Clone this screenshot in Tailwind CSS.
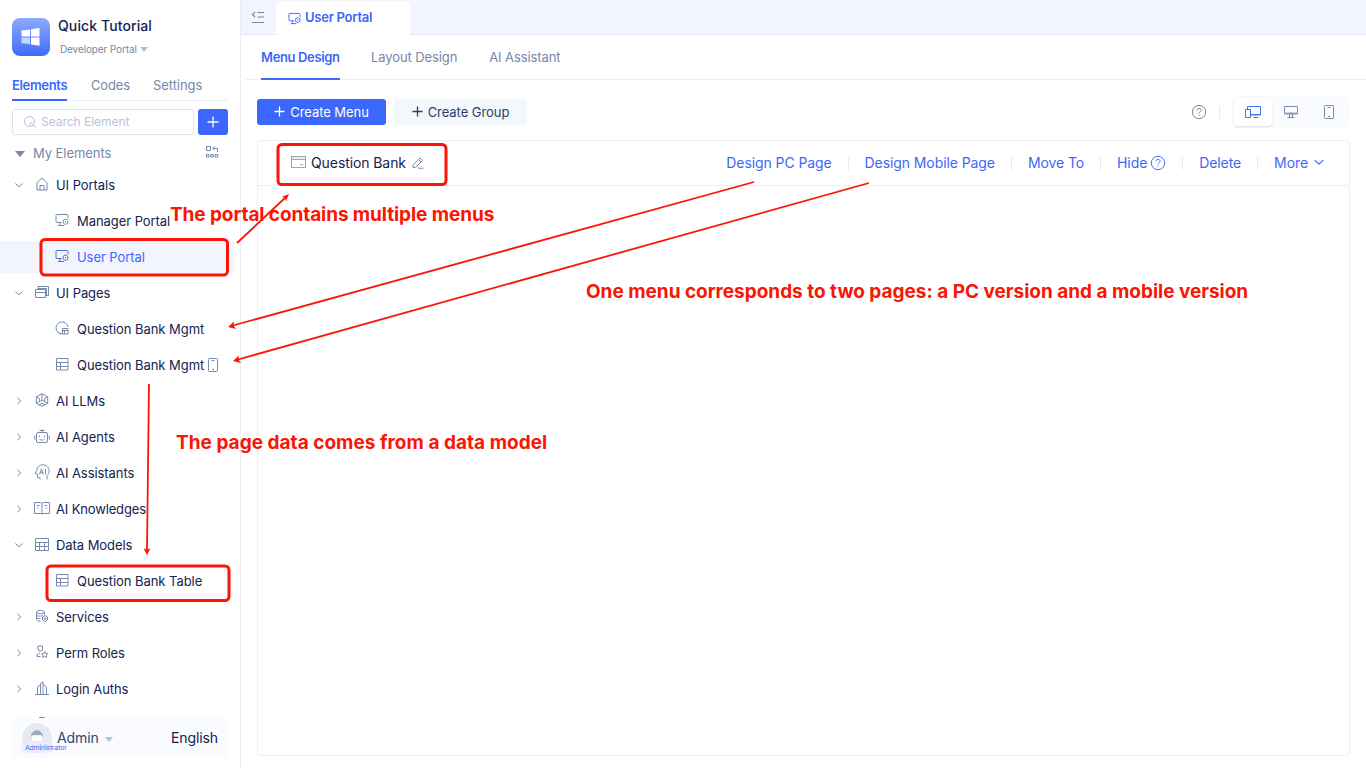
<!DOCTYPE html>
<html lang="en">
<head>
<meta charset="utf-8">
<title>Quick Tutorial</title>
<script src="https://cdn.jsdelivr.net/npm/@tailwindcss/browser@4"></script>
</head>
<body class="relative flex h-[768px] w-[1366px] overflow-hidden bg-white font-['Inter','Liberation_Sans',sans-serif] text-[13px] tracking-[-0.06px] text-[#14234f]">
<svg class="hidden">
  <defs>
    <symbol id="portal" viewBox="0 0 14 14"><path d="M6.500 9.500H2a1 1 0 0 1-1-1v-6a1 1 0 0 1 1-1h10a1 1 0 0 1 1 1v3M3 12.500h6M5 9.500v3"/><path d="M8.200 7.200 10.500 6l2.300 1.200v3l-2.300 1.300-2.300-1.300zM10.500 8v1.400"/></symbol>
    <symbol id="table" viewBox="0 0 14 14"><path d="M1.500 1.500h11.500v11.500h-11.500zM1.500 5.500h11.500M1.500 9.500h11.500M5.500 5.500v7.500"/></symbol>
    <symbol id="right" viewBox="0 0 8 8"><path d="M2.300.8 5.800 4 2.300 7.200"/></symbol>
    <symbol id="down" viewBox="0 0 8 8"><path d="M.5 2.500 4 5.800 7.500 2.500"/></symbol>
    <symbol id="phone" viewBox="0 0 12 16"><rect x="1.500" y="1.500" width="9" height="13" rx=".8"/><path d="M4.500 3.500h3M5 12.500h2"/></symbol>
    <symbol id="help" viewBox="0 0 16 16"><circle cx="8" cy="8" r="6.700"/><path d="M5.900 6.500c0-2.900 4.200-2.700 4.200-.2 0 1.500-2.100 1.600-2.100 3.200M8 10.700v1.100"/></symbol>
  </defs>
</svg>

<aside class="flex w-[241px] shrink-0 flex-col border-r border-[#ebedf6]">
  <div class="flex h-[73px] shrink-0 pl-3 pt-[18px]">
    <div class="flex size-[38px] items-center justify-center rounded-lg bg-linear-to-b from-[#8ea9ff] to-[#4169fb]">
      <svg class="size-5" viewBox="0 0 20 20" fill="#fff"><path d="M.5 3.500 9 2.500v7H.5zM10 2.300 18.500 1v8.500H10zM10 10.500h8.500v8.300L10 17.500z"/><path opacity=".65" d="M.5 10.500H9v6.800l-8.500-1z"/></svg>
    </div>
    <div class="pl-2">
      <div class="-mt-px h-[18px] text-[14px] font-medium leading-[17px] tracking-[0.1px]">Quick Tutorial</div>
      <div class="mt-[6px] flex items-center gap-[3px] pl-[2px] text-[10px] leading-4 tracking-[-0.12px] text-[#7787a8]"><span>Developer Portal</span><i class="border-x-4 border-t-[5px] border-x-transparent border-t-[#b3bfda]"></i></div>
    </div>
  </div>
  <nav class="mx-3 flex h-7 shrink-0 gap-6 border-b border-[#e9edf8] text-[#7787a8]">
    <span class="-mb-px w-[55px] border-b-2 border-[#3c67fc] pt-[3px] font-semibold tracking-[-0.33px] text-[#3c67fc]">Elements</span><span class="pt-[3px] tracking-[-0.15px]">Codes</span><span class="-ml-px pt-[3px]">Settings</span>
  </nav>
  <div class="mx-3 mt-2 flex h-[26px] shrink-0 gap-1">
    <div class="flex w-[182px] items-center gap-1 rounded-[3px] border border-[#dce2f2] pl-[10px] text-[#b7c3dc]">
      <svg class="size-[14px]" viewBox="0 0 14 14" fill="none" stroke="#aebbd6"><circle cx="6.500" cy="6.500" r="5"/><path d="m10 10 2.500 2.500M6 9.200c1.500.2 2.800-.8 3-2.200"/></svg><span class="text-[12px] tracking-[-0.03px]">Search Element</span>
    </div>
    <div class="flex w-[30px] items-center justify-center rounded-[3px] bg-[#3c67fc]"><svg class="size-3" viewBox="0 0 12 12" stroke="#fff" stroke-width="1.300"><path d="M6 .5v11M.5 6h11"/></svg></div>
  </div>
  <div class="flex h-8 shrink-0 items-center pl-[15px] pr-[21px] pt-[5px] text-[#7787a8]">
    <i class="border-x-[5px] border-t-[6px] border-x-transparent border-t-[#7787a8]"></i><span class="flex-1 pl-2">My Elements</span>
    <svg class="mb-1 size-[14px]" viewBox="0 0 14 14" fill="none" stroke="#7787a8"><path d="M1.500 1.500h4v4h-4zM1.500 9.500h2.500V12H1.500zM5.800 9.500h2.500V12H5.800zM10.200 9.500h2.500V12h-2.500zM8 3.300h4.500V7M9.500 1.500 7.800 3.300 9.500 5"/></svg>
  </div>
  <div class="flex min-h-0 flex-1 flex-col overflow-hidden fill-none stroke-[#7a8aad] *:flex *:h-9 *:shrink-0 *:items-center [&_.icon]:mb-0.5 [&_span]:mt-0.5">
    <div class="pl-[15px]"><svg class="size-2"><use href="#down"/></svg><svg class="icon ml-3 mr-[7px] size-[14px]" viewBox="0 0 14 14"><path d="M2 13V5.500L7 1l5 4.500V13zM5 13V8.500h4V13"/></svg><span>UI Portals</span></div>
    <div class="pl-[55px]"><svg class="icon mr-2 size-[14px]"><use href="#portal"/></svg><span>Manager Portal</span></div>
    <div><div class="flex h-8 w-[234px] items-center bg-[#f2f5fe] stroke-[#4e70dc] pl-[55px] text-[#3c67fc]"><svg class="icon mr-2 size-[14px]"><use href="#portal"/></svg><span>User Portal</span></div></div>
    <div class="pl-[15px]"><svg class="size-2"><use href="#down"/></svg><svg class="icon ml-3 mr-[7px] size-[14px]" viewBox="0 0 14 14"><path d="M.5 4.500h10v8H.5zM.5 7.500h10M3 4.500v-3h10.500v9h-3M3 3.500h8.500v7"/></svg><span>UI Pages</span></div>
    <div class="pl-[55px]"><svg class="icon mr-2 size-[14px]" viewBox="0 0 14 14"><path d="M6 12.800A6 6 0 1 1 13 6M4 12.800h3M7.500 7.500h5.500v5.500H7.500zM7.500 9.500H13M9.500 9.500V13"/></svg><span>Question Bank Mgmt</span></div>
    <div class="pl-[55px]"><svg class="icon mr-2 size-[14px]"><use href="#table"/></svg><span>Question Bank Mgmt</span><svg class="ml-[3px] h-4 w-3"><use href="#phone"/></svg></div>
    <div class="pl-[15px]"><svg class="size-2"><use href="#right"/></svg><svg class="icon ml-3 mr-[7px] size-[14px]" viewBox="0 0 14 14"><path d="m7 .7 5.700 3.200v6.500L7 13.400l-5.700-3V3.900zM7 .7v6.500L1.300 10.400M7 7.200l5.700 3.200M1.300 3.900l3 1.500v3.200M12.700 3.900l-3 1.500v3.200M4.300 11.700 7 10.200l2.700 1.500"/></svg><span>AI LLMs</span></div>
    <div class="pl-[15px]"><svg class="size-2"><use href="#right"/></svg><svg class="icon ml-[11px] mr-[6px] size-4" viewBox="0 0 16 16"><rect x="2.500" y="4.500" width="11" height="10" rx="1.500"/><path d="M8 1.500v3M5.500 2.500h5M.7 7.500v4M15.300 7.500v4M5.500 7.500v1.500M10.500 7.500v1.500M5.500 11c1 1.500 4 1.500 5 0"/></svg><span>AI Agents</span></div>
    <div class="pl-[15px]"><svg class="size-2"><use href="#right"/></svg><svg class="icon ml-[11px] mr-[6px] size-4" viewBox="0 0 16 16"><path d="M6 15.500v-1.800H3.500V10.500L1 9.300 2.800 6.500C3 3 5.700.8 8.500.8c4 0 6.700 2.700 6.700 6 0 2.200-1 3.700-2.200 4.700v4M5.500 10.500l2-5.500 2 5.500M6.200 8.800h2.600M11.500 5v5.500"/></svg><span>AI Assistants</span></div>
    <div class="pl-[15px]"><svg class="size-2"><use href="#right"/></svg><svg class="icon ml-[11px] mr-[6px] size-4" viewBox="0 0 16 16"><path d="M.5 2.500h6L8 3.500l1.500-1h6v11H9L8 14l-1-.5H.5zM8 3.500V14M3 5.500h2.500M3 8h1.500M10.500 5.500H13M11.500 8H13"/></svg><span class="tracking-[-0.15px]">AI Knowledges</span></div>
    <div class="pl-[15px]"><svg class="size-2"><use href="#down"/></svg><svg class="icon ml-[11px] mr-[6px] size-4" viewBox="0 0 16 16"><path d="M1.500 2.500h13v12h-13zM1.500 6.500h13M1.500 10.500h13M5.500 6.500v8M10.500 6.500v8"/></svg><span>Data Models</span></div>
    <div class="pl-[55px]"><svg class="icon mr-2 size-[14px]"><use href="#table"/></svg><span>Question Bank Table</span></div>
    <div class="pl-[15px]"><svg class="size-2"><use href="#right"/></svg><svg class="icon ml-3 mr-[7px] size-[14px]" viewBox="0 0 14 14"><ellipse cx="5.500" cy="3" rx="4" ry="1.700"/><path d="M1.500 3v7.500c0 1 2 1.700 4 1.700M9.500 3v2.500M1.500 5.500c0 2 5 2 6.500 1M1.500 8c0 1.500 2.500 1.800 4 1.500M10 6.500l2.500 1.500v3L10 12.500 7.500 11V8z"/><circle cx="10" cy="9.500" r=".8"/></svg><span>Services</span></div>
    <div class="pl-[15px]"><svg class="size-2"><use href="#right"/></svg><svg class="icon ml-3 mr-[7px] size-[14px]" viewBox="0 0 14 14"><path d="M3 1h4.500v4L5.300 6.200 3 5zM5 8C3 8 2 9.500 2 11.500h3.500M9.700 6.500l1 2 2.200.2-1.600 1.500.4 2.200-2-1-2 1 .4-2.200-1.600-1.500 2.200-.2z"/></svg><span>Perm Roles</span></div>
    <div class="pl-[15px]"><svg class="size-2"><use href="#right"/></svg><svg class="icon ml-3 mr-[7px] size-[14px]" viewBox="0 0 14 14"><path d="M0 13.500h14M2.500 13.500V6L5 4M5.500 13.500V2.500L8 .8v12.700M8 3l3.500 3v7.500"/></svg><span>Login Auths</span></div>
    <div class="pl-[15px]"><svg class="mb-[5px] ml-5 size-[14px]" viewBox="0 0 14 14"><path d="M4.500 1.500h5v5h-5z"/></svg></div>
  </div>
  <div class="relative mx-3 mb-[10px] flex h-10 shrink-0 items-center rounded bg-[#f9fbfe] text-[14px] tracking-[-0.1px]">
    <div class="ml-[10px] flex size-[30px] items-center justify-center rounded-full bg-[#e5eaf2]"><svg class="mb-1 size-4" viewBox="0 0 16 16"><path d="M2 9c0-9 12-9 12 0l-2-2H4z" fill="#9eabc2"/><path d="M3 8.500 4.500 7.500h7L13 8.500V13H3z" fill="#fff"/></svg></div>
    <span class="-mt-0.5 pl-[5px] text-[#35446b]">Admin</span><i class="ml-[6px] mt-[3px] border-x-[4.500px] border-t-[5px] border-x-transparent border-t-[#b3bfda]"></i><span class="-mt-0.5 ml-auto mr-[10px]">English</span>
    <div class="absolute left-[9px] top-[24px] h-[11px] w-8 whitespace-nowrap rounded-full bg-[#e8eefe]/80 pl-1 text-[6.800px] leading-[11px] text-[#3c67fc]">Administrator</div>
  </div>
</aside>

<main class="flex min-w-0 flex-1 flex-col">
  <div class="flex h-[35px] shrink-0 border-b border-[#e4e8f4] bg-[#f2f5fd]">
    <div class="flex w-[35px] items-center pl-[10px]"><svg class="size-[14px]" viewBox="0 0 14 14" fill="none" stroke="#7787a8" stroke-width="1.200"><path d="M6.500 2.500H13M6.500 7H13M1 12.500h12M4 2 1.500 4.500 4 7"/></svg></div>
    <div class="mt-px flex h-[34px] w-[134px] items-center gap-1 rounded-t bg-white pl-3 font-semibold tracking-[-0.25px] text-[#3c67fc]"><svg class="size-[13px] fill-none stroke-[#3c67fc]"><use href="#portal"/></svg><span>User Portal</span></div>
  </div>
  <nav class="ml-1 flex h-[45px] shrink-0 gap-8 border-b border-[#eceef4] pl-4 tracking-[-0.1px] text-[#7787a8]">
    <span class="-mb-px w-[79px] whitespace-nowrap border-b-2 border-[#3c67fc] pt-[13px] font-semibold tracking-[-0.36px] text-[#3c67fc]">Menu Design</span><span class="-ml-px pt-[13px]">Layout Design</span><span class="pt-[13px]">AI Assistant</span>
  </nav>
  <div class="mx-4 mt-4 flex h-8 shrink-0 items-center">
    <div class="flex h-[26px] w-[129px] items-center justify-center gap-[5px] rounded-[3px] bg-[#3c67fc] text-white"><svg class="mb-px size-[11px]" viewBox="0 0 12 12" stroke="#fff" stroke-width="1.400"><path d="M6 .5v11M.5 6h11"/></svg><span class="mt-0.5">Create Menu</span></div>
    <div class="ml-2 flex h-[26px] w-[133px] items-center justify-center gap-[5px] rounded-[3px] bg-[#f4f7fd] text-[#2e3d66]"><svg class="mb-px size-[11px]" viewBox="0 0 12 12" stroke="#2e3d66" stroke-width="1.400"><path d="M6 .5v11M.5 6h11"/></svg><span class="mt-0.5">Create Group</span></div>
    <svg class="ml-auto size-4 fill-none stroke-[#7787a8]"><use href="#help"/></svg>
    <i class="ml-3 mr-[13px] h-[13px] w-px bg-[#e6e9f2]"></i>
    <div class="flex h-8 w-[117px] items-center rounded bg-[#f9fbfe]">
      <div class="ml-px flex h-7 w-[38px] items-center justify-center rounded bg-white shadow-sm"><svg class="size-4" viewBox="0 0 16 16" fill="none" stroke="#4770fb"><path d="M2.500 5V2.500h13v8.500H6M6 10.500h9.500M8.500 13.500h5M.5 5.500h5v8h-5z"/></svg></div>
      <div class="flex w-[38px] justify-center"><svg class="size-4" viewBox="0 0 16 16" fill="none" stroke="#7e8dac"><path d="M1.500 2.500h13V10h-13zM1.500 9.200h13M6.500 10v3M9.500 10v3M4.500 13.500h7M8 8v2"/></svg></div>
      <div class="flex w-[38px] justify-center"><svg class="h-4 w-3 fill-none stroke-[#7e8dac]"><use href="#phone"/></svg></div>
    </div>
  </div>
  <section class="mx-4 mb-3 mt-3 flex-1 rounded border border-[#eceef4]">
    <div class="flex h-[45px] items-center border-b border-[#eceef4] pl-[33px] text-[14px] tracking-[-0.09px]">
      <svg class="mb-0.5 h-3 w-[15px]" viewBox="0 0 15 12" fill="none" stroke="#a1a4aa"><path fill="#ededee" d="M.5.5h14v3H.5z"/><path d="M.5.5h14v11H.5zM9 8.500h3"/></svg>
      <span class="-mt-0.5 pl-[5px]">Question Bank</span>
      <svg class="ml-[6px] size-3" viewBox="0 0 12 12" fill="none" stroke="#7e8dac"><path d="M1 8 8 1 10.500 3.500 3.500 10.500H1zM6.500 2.500 9 5M6 11.200H11.500"/></svg>
      <div class="ml-auto flex items-center pr-[25px] text-[#3c67fc] [&>span]:-mt-0.5">
        <span>Design PC Page</span><i class="mx-4 h-[13px] w-px bg-[#e6e9f2]"></i><span>Design Mobile Page</span><i class="mx-4 h-[13px] w-px bg-[#e6e9f2]"></i><span>Move To</span><i class="mx-4 h-[13px] w-px bg-[#e6e9f2]"></i><span>Hide</span><svg class="ml-[3px] size-4 fill-none stroke-[#4770fb]"><use href="#help"/></svg><i class="mx-4 h-[13px] w-px bg-[#e6e9f2]"></i><span>Delete</span><i class="mx-4 h-[13px] w-px bg-[#e6e9f2]"></i><span>More</span><svg class="mb-0.5 ml-[6px] size-[10px] fill-none stroke-[#4770fb]"><use href="#down"/></svg>
      </div>
    </div>
  </section>
</main>

<svg class="pointer-events-none absolute inset-0 h-[768px] w-[1366px]" fill="none" stroke="#fa1505" stroke-width="2">
  <g stroke-width="3"><rect x="278" y="144.500" width="168" height="40" rx="4"/><rect x="41" y="239.500" width="186.500" height="35.500" rx="4"/><rect x="47" y="566" width="182" height="34.500" rx="4"/></g>
  <path stroke-width="1.800" d="M237 243 286 197M754 182 233 325.500M869 183 238 359.500M149 384 147 550"/>
  <g fill="#fa1505" stroke="none"><path d="M289 194 281.500 197 285 197.500 286 201Z"/><path d="M228 327 234 321.500 233.500 325.500 236 329Z"/><path d="M233 361 239 355.500 238.500 359.500 241 363Z"/><path d="M147 555 143.500 548 147 550 150.500 548Z"/></g>
</svg>
<div class="pointer-events-none absolute left-[170px] top-[203px] whitespace-nowrap text-[19px] font-bold leading-[23px] tracking-[-0.09px] text-[#fa1505]">The portal contains multiple menus</div>
<div class="pointer-events-none absolute left-[586px] top-[280px] whitespace-nowrap text-[19px] font-bold leading-[23px] tracking-[-0.02px] text-[#fa1505]">One menu corresponds to two pages: a PC version and a mobile version</div>
<div class="pointer-events-none absolute left-[176px] top-[431px] whitespace-nowrap text-[19px] font-bold leading-[23px] tracking-[0.02px] text-[#fa1505]">The page data comes from a data model</div>
</body>
</html>
